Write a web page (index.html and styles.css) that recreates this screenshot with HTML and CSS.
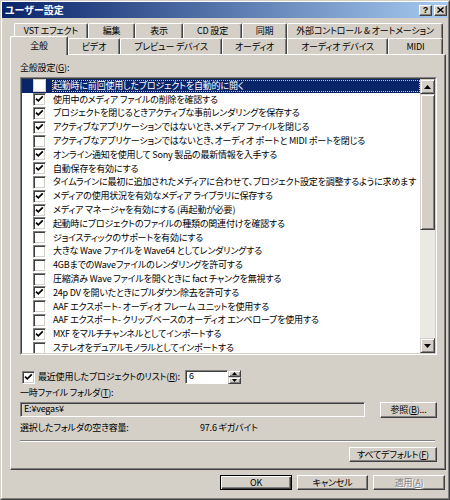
FILE: index.html
```html
<!DOCTYPE html>
<html lang="ja">
<head>
<meta charset="utf-8">
<title>ユーザー設定</title>
<link rel="stylesheet" href="styles.css">
</head>
<body>
<div class="window">
  <div class="frame">
    <div class="titlebar">
      <span class="title">ユーザー設定</span>
      <span class="tb-btn help">?</span>
      <span class="tb-btn close"><svg width="7" height="6" viewBox="0 0 7 6"><path d="M0.5 0.5 L6.5 5.5 M6.5 0.5 L0.5 5.5" stroke="#000" stroke-width="1.4"/></svg></span>
    </div>

    <div class="tabs">
      <div class="tabrow back">
        <div class="tab w74">VST エフェクト</div>
        <div class="tab w47">編集</div>
        <div class="tab w48">表示</div>
        <div class="tab w59">CD 設定</div>
        <div class="tab w45">同期</div>
        <div class="tab w156">外部コントロール &amp; オートメーション</div>
      </div>
      <div class="tabrow front">
        <div class="tab sel">全般</div>
        <div class="tab w52">ビデオ</div>
        <div class="tab w102">プレビュー デバイス</div>
        <div class="tab w65">オーディオ</div>
        <div class="tab w101">オーディオ デバイス</div>
        <div class="tab w55">MIDI</div>
      </div>
    </div>

    <div class="panel">
      <div class="label">全般設定(<u>G</u>):</div>
      <div class="list">
        <div class="list-in">
          <div class="items">
            <div class="item hl"><span class="cb"></span><span class="txt focus">起動時に前回使用したプロジェクトを自動的に開く</span></div>
            <div class="item"><span class="cb on"><svg viewBox="0 0 9 9"><path d="M1 3.6 L3.3 5.9 L7.8 1.4"/></svg></span><span class="txt">使用中のメディア ファイルの削除を確認する</span></div>
            <div class="item"><span class="cb on"><svg viewBox="0 0 9 9"><path d="M1 3.6 L3.3 5.9 L7.8 1.4"/></svg></span><span class="txt">プロジェクトを閉じるときアクティブな事前レンダリングを保存する</span></div>
            <div class="item"><span class="cb on"><svg viewBox="0 0 9 9"><path d="M1 3.6 L3.3 5.9 L7.8 1.4"/></svg></span><span class="txt">アクティブなアプリケーションではないとき、メディア ファイルを閉じる</span></div>
            <div class="item"><span class="cb"></span><span class="txt">アクティブなアプリケーションではないとき、オーディオ ポートと MIDI ポートを閉じる</span></div>
            <div class="item"><span class="cb on"><svg viewBox="0 0 9 9"><path d="M1 3.6 L3.3 5.9 L7.8 1.4"/></svg></span><span class="txt">オンライン通知を使用して Sony 製品の最新情報を入手する</span></div>
            <div class="item"><span class="cb on"><svg viewBox="0 0 9 9"><path d="M1 3.6 L3.3 5.9 L7.8 1.4"/></svg></span><span class="txt">自動保存を有効にする</span></div>
            <div class="item"><span class="cb"></span><span class="txt">タイムラインに最初に追加されたメディアに合わせて、プロジェクト設定を調整するように求めます</span></div>
            <div class="item"><span class="cb on"><svg viewBox="0 0 9 9"><path d="M1 3.6 L3.3 5.9 L7.8 1.4"/></svg></span><span class="txt">メディアの使用状況を有効なメディア ライブラリに保存する</span></div>
            <div class="item"><span class="cb on"><svg viewBox="0 0 9 9"><path d="M1 3.6 L3.3 5.9 L7.8 1.4"/></svg></span><span class="txt">メディア マネージャを有効にする (再起動が必要)</span></div>
            <div class="item"><span class="cb on"><svg viewBox="0 0 9 9"><path d="M1 3.6 L3.3 5.9 L7.8 1.4"/></svg></span><span class="txt">起動時にプロジェクトのファイルの種類の関連付けを確認する</span></div>
            <div class="item"><span class="cb"></span><span class="txt">ジョイスティックのサポートを有効にする</span></div>
            <div class="item"><span class="cb"></span><span class="txt">大きな Wave ファイルを Wave64 としてレンダリングする</span></div>
            <div class="item"><span class="cb"></span><span class="txt">4GBまでのWaveファイルのレンダリングを許可する</span></div>
            <div class="item"><span class="cb"></span><span class="txt">圧縮済み Wave ファイルを開くときに fact チャンクを無視する</span></div>
            <div class="item"><span class="cb on"><svg viewBox="0 0 9 9"><path d="M1 3.6 L3.3 5.9 L7.8 1.4"/></svg></span><span class="txt">24p DV を開いたときにプルダウン除去を許可する</span></div>
            <div class="item"><span class="cb"></span><span class="txt">AAF エクスポート- オーディオ フレーム ユニットを使用する</span></div>
            <div class="item"><span class="cb"></span><span class="txt">AAF エクスポート- クリップベースのオーディオ エンベロープを使用する</span></div>
            <div class="item"><span class="cb on"><svg viewBox="0 0 9 9"><path d="M1 3.6 L3.3 5.9 L7.8 1.4"/></svg></span><span class="txt">MXF をマルチチャンネルとしてインポートする</span></div>
            <div class="item"><span class="cb"></span><span class="txt">ステレオをデュアルモノラルとしてインポートする</span></div>
          </div>
          <div class="scroll">
            <div class="sb-btn"><svg width="7" height="4" viewBox="0 0 7 4"><path d="M3.5 0 L7 4 L0 4Z"/></svg></div>
            <div class="thumb"></div>
            <div class="track"></div>
            <div class="sb-btn"><svg width="7" height="4" viewBox="0 0 7 4"><path d="M0 0 L7 0 L3.5 4Z"/></svg></div>
          </div>
        </div>
      </div>

      <div class="recent">
        <span class="cb on solo"><svg viewBox="0 0 9 9"><path d="M1 3.6 L3.3 5.9 L7.8 1.4"/></svg></span>
        <span class="recent-label">最近使用したプロジェクトのリスト(<u>R</u>):</span>
        <span class="num">6</span>
        <span class="spin">
          <span class="spin-btn"><svg width="5" height="3" viewBox="0 0 5 3"><path d="M2.5 0 L5 3 L0 3Z"/></svg></span>
          <span class="spin-btn"><svg width="5" height="3" viewBox="0 0 5 3"><path d="M0 0 L5 0 L2.5 3Z"/></svg></span>
        </span>
      </div>
      <div class="line">一時ファイル フォルダ(<u>T</u>):</div>
      <div class="folder-row">
        <div class="field">E:¥vegas¥</div>
        <div class="btn browse">参照(<u>B</u>)...</div>
      </div>
      <div class="line free"><span class="free-label">選択したフォルダの空き容量:</span><span>97.6 ギガバイト</span></div>
      <div class="sep"></div>
      <div class="default-row"><div class="btn alldef">すべてデフォルト(<u>F</u>)</div></div>
    </div>

    <div class="actions">
      <div class="btn default w72">OK</div>
      <div class="btn w71">キャンセル</div>
      <div class="btn disabled w72">適用(<u>A</u>)</div>
    </div>
  </div>
</div>
</body>
</html>
```
FILE: styles.css
```css
* { box-sizing: border-box; }

body {
  margin: 0;
  background: #d4d0c8;
  color: #000;
  font-family: "Noto Sans CJK JP", "Liberation Sans", sans-serif;
  font-size: 9px;
  letter-spacing: -0.2px;
  font-feature-settings: "palt";
  line-height: 12px;
}

u { text-decoration: underline; text-underline-offset: 1px; }

.window {
  width: 450px;
  height: 500px;
  background: #d4d0c8;
  border: 1px solid;
  border-color: #d4d0c8 #404040 #404040 #d4d0c8;
  display: flex;
  flex-direction: column;
}

.frame {
  flex: 1;
  border: 1px solid;
  border-color: #fff #808080 #808080 #fff;
  display: flex;
  flex-direction: column;
}

.titlebar {
  height: 16px;
  background: linear-gradient(to right, #0a246a, #a6caf0);
  display: flex;
  align-items: center;
  padding: 0 1px 0 3px;
  gap: 2px;
}

.title {
  flex: 1;
  color: #fff;
  font-weight: bold;
  font-size: 10px;
  letter-spacing: 0;
}

.tb-btn {
  width: 13px;
  height: 11px;
  background: #d4d0c8;
  border: 1px solid;
  border-color: #fff #404040 #404040 #fff;
  box-shadow: inset -1px -1px #808080;
  display: flex;
  align-items: center;
  justify-content: center;
  font-family: "Liberation Sans", sans-serif;
  font-weight: bold;
  font-size: 9px;
  line-height: 9px;
  letter-spacing: 0;
}

/* tabs */
.tabs { margin: 5px 0 0 8px; }

.tabrow { display: flex; }
.tabrow.back { margin-left: 4px; height: 15px; }
.tabrow.front { margin-left: 2px; height: 16px; position: relative; z-index: 1; }

.tab {
  height: 100%;
  background: #d4d0c8;
  border-top: 1px solid #fff;
  border-left: 1px solid #fff;
  border-right: 1px solid #404040;
  box-shadow: inset -1px 0 #808080;
  border-radius: 2px 2px 0 0;
  display: flex;
  align-items: center;
  justify-content: center;
  white-space: nowrap;
  flex: none;
}

.back .tab { height: 16px; padding-bottom: 1px; }

.tab.sel {
  width: 58px;
  height: 19px;
  margin-left: -2px;
  margin-top: -2px;
  padding-bottom: 1px;
}

.w45 { width: 45px; }
.w47 { width: 47px; }
.w48 { width: 48px; }
.w52 { width: 52px; }
.w55 { width: 55px; }
.w59 { width: 59px; }
.w65 { width: 65px; }
.w71 { width: 71px; }
.w72 { width: 72px; }
.w74 { width: 74px; }
.w101 { width: 101px; }
.w102 { width: 102px; }
.w156 { width: 156px; }

/* panel */
.panel {
  margin-left: 8px;
  width: 436px;
  height: 416px;
  border: 1px solid;
  border-color: #fff #404040 #404040 #fff;
  box-shadow: inset -1px -1px #808080;
  padding: 7px 8px 0 9px;
  display: flex;
  flex-direction: column;
}

.label { height: 12px; }

.list {
  margin-top: 3px;
  width: 417px;
  height: 278px;
  border: 1px solid;
  border-color: #808080 #fff #fff #808080;
}

.list-in {
  height: 100%;
  border: 1px solid;
  border-color: #404040 #d4d0c8 #d4d0c8 #404040;
  display: flex;
}

.items {
  flex: 1;
  background: #fff;
  overflow: hidden;
}

.item {
  height: 13.8px;
  display: flex;
  align-items: center;
  padding-left: 11px;
  white-space: nowrap;
}

.item.hl { background: #0a246a; color: #fff; }

.txt {
  margin-left: 6px;
  padding: 0 1px;
  line-height: 12px;
}

.txt.focus {
  flex: 1;
  outline: 1px dotted #d8c890;
  outline-offset: -1px;
}

.cb {
  flex: none;
  width: 13px;
  height: 13px;
  background: #fff;
  border: 1px solid;
  border-color: #808080 #fff #fff #808080;
  box-shadow: inset 1px 1px #404040, inset -1px -1px #d4d0c8;
  display: flex;
  align-items: center;
  justify-content: center;
}

.hl .cb { box-shadow: none; border-color: #d4d0c8; }

.cb svg {
  width: 9px;
  height: 9px;
  fill: none;
  stroke: #000;
  stroke-width: 1.7;
}

/* scrollbar */
.scroll {
  width: 15px;
  display: flex;
  flex-direction: column;
  background: #ebe9e4;
}

.sb-btn, .thumb, .spin-btn {
  background: #d4d0c8;
  border: 1px solid;
  border-color: #d4d0c8 #404040 #404040 #d4d0c8;
  box-shadow: inset 1px 1px #fff, inset -1px -1px #808080;
}

.sb-btn {
  height: 15px;
  display: flex;
  align-items: center;
  justify-content: center;
}

.thumb { height: 136px; }
.track { flex: 1; }

/* lower controls */
.recent {
  margin-top: 15px;
  height: 14px;
  display: flex;
  align-items: center;
}

.cb.solo { margin-left: 2px; }

.recent-label {
  width: 150px;
  padding-left: 3px;
  white-space: nowrap;
}

.num {
  width: 43px;
  height: 14px;
  background: #fff;
  border: 1px solid;
  border-color: #808080 #fff #fff #808080;
  box-shadow: inset 1px 1px #404040;
  padding-left: 3px;
  line-height: 11px;
  font-family: "Liberation Sans", sans-serif;
  font-size: 9px;
}

.spin {
  width: 13px;
  height: 14px;
  display: flex;
  flex-direction: column;
}

.spin-btn {
  height: 7px;
  display: flex;
  align-items: center;
  justify-content: center;
}

.line {
  margin-top: 3px;
  height: 12px;
  white-space: nowrap;
}

.folder-row {
  margin-top: 3px;
  display: flex;
  height: 16px;
}

.field {
  width: 345px;
  height: 15px;
  border: 1px solid;
  border-color: #808080 #fff #fff #808080;
  box-shadow: inset 1px 1px #404040, inset -1px -1px #d4d0c8;
  padding-left: 3px;
  line-height: 12px;
}

.btn {
  background: #d4d0c8;
  border: 1px solid;
  border-color: #fff #404040 #404040 #fff;
  box-shadow: inset -1px -1px #808080;
  display: flex;
  align-items: center;
  justify-content: center;
  white-space: nowrap;
  flex: none;
}

.browse { margin-left: 15px; width: 57px; height: 16px; }

.line.free { margin-top: 4px; display: flex; }
.free-label { width: 180px; }

.sep {
  margin-top: 6px;
  width: 415px;
  height: 2px;
  border-top: 1px solid #808080;
  border-bottom: 1px solid #fff;
}

.default-row {
  margin-top: 5px;
  display: flex;
  justify-content: flex-end;
}

.alldef { width: 88px; height: 15px; }

.actions {
  margin-top: 5px;
  display: flex;
  justify-content: flex-end;
  gap: 5px;
  padding-right: 3px;
}

.actions .btn { height: 15px; }

.btn.default {
  border: 1px solid #000;
  box-shadow: inset 1px 1px #fff, inset -1px -1px #404040, inset -2px -2px #808080;
}

.btn.disabled {
  color: #808080;
  text-shadow: 1px 1px #fff;
}
```
